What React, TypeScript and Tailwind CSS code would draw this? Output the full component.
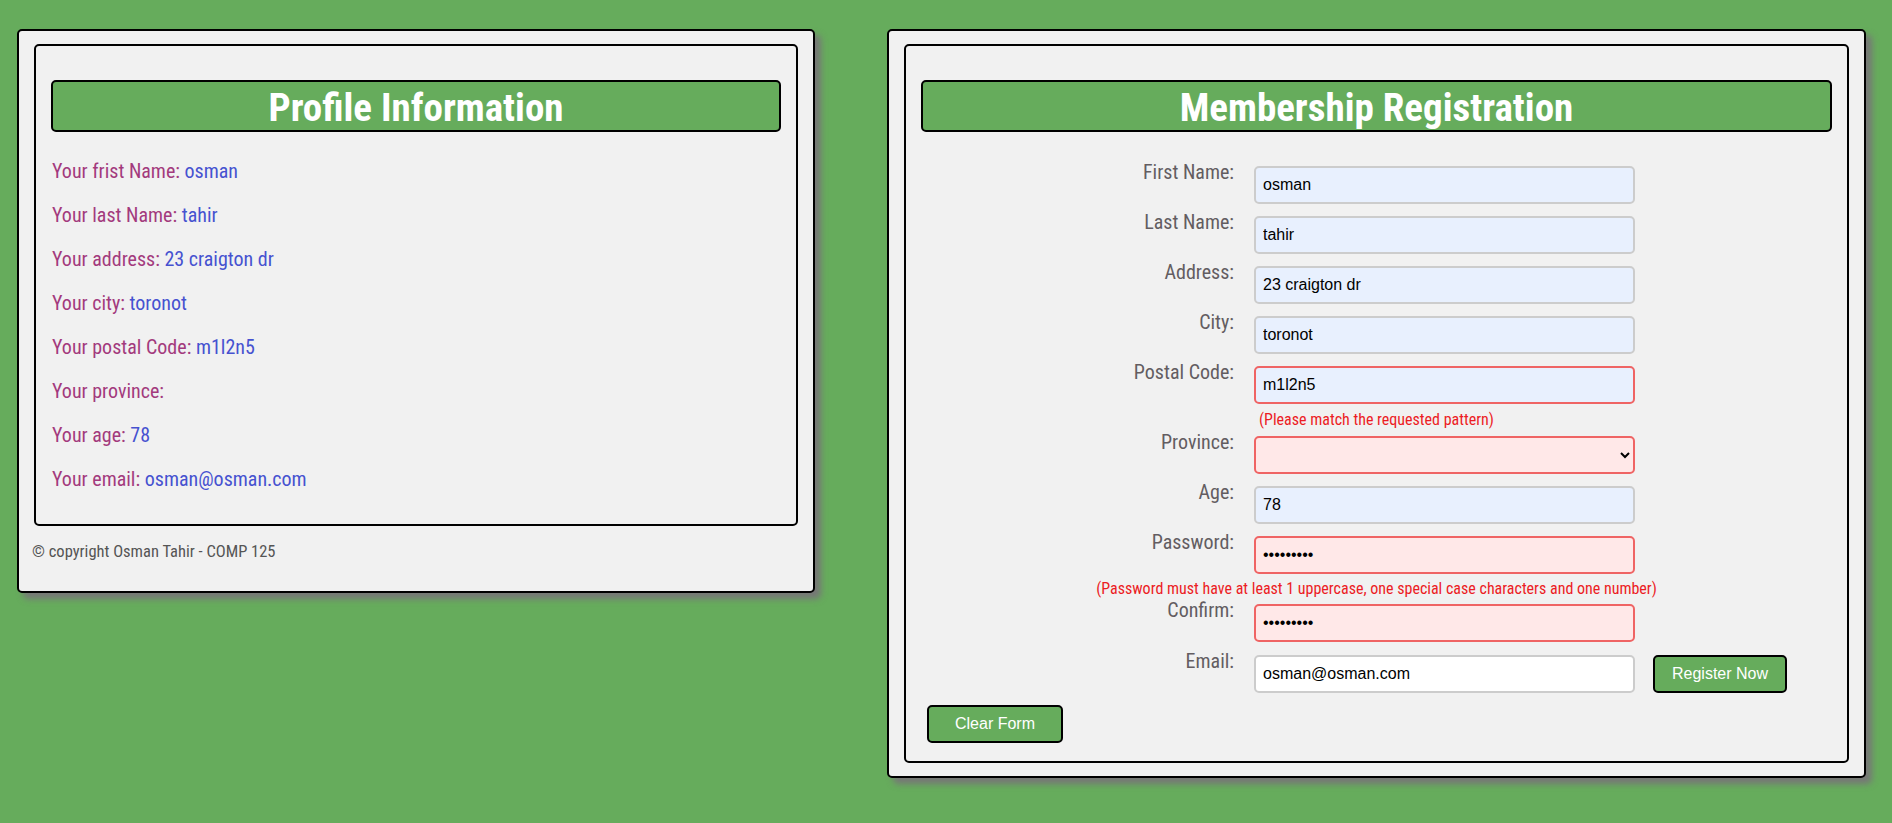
import React from 'react';

const COND = "font-['Roboto_Condensed','Liberation_Sans_Narrow',Roboto,sans-serif]";
const ARIAL = "font-['Liberation_Sans',Arial,sans-serif]";

const PROFILE = [
    { label: 'Your frist Name:', value: 'osman' },
    { label: 'Your last Name:', value: 'tahir' },
    { label: 'Your address:', value: '23 craigton dr' },
    { label: 'Your city:', value: 'toronot' },
    { label: 'Your postal Code:', value: 'm1l2n5' },
    { label: 'Your province:', value: '' },
    { label: 'Your age:', value: '78' },
    { label: 'Your email:', value: 'osman@osman.com' },
];

const inputBase = `h-[38px] w-[381px] rounded-[5px] border-2 px-[7px] text-[16px] text-black outline-none ${ARIAL}`;
const okAuto = 'border-[#cccccc] bg-[#e8f0fe]';
const badAuto = 'border-[#ef6464] bg-[#e8f0fe]';
const bad = 'border-[#ef6464] bg-[#ffe8e8]';

function Header({ title }: { title: string }) {
    return (
        <div className="flex h-[52px] items-center justify-center rounded-[5px] border-2 border-black bg-[#66ac5c] pt-[3px]">
            <h1 className={`text-[39px] font-bold leading-[48px] text-white ${COND}`}>{title}</h1>
        </div>
    );
}

function Row({ label, children }: { label: string; children: React.ReactNode }) {
    return (
        <div className="flex items-start">
            <label className={`-mt-[6px] w-[313px] text-right text-[20px] leading-[24px] text-[#635d61] ${COND}`}>
                {label}
            </label>
            <div className="ml-[20px] flex items-start gap-[18px]">{children}</div>
        </div>
    );
}

function ErrorLine({ text, center }: { text: string; center?: boolean }) {
    return (
        <p
            className={`h-[18px] text-[16px] leading-[18px] text-[#ec1c24] ${COND} ${
                center ? 'text-center' : 'pl-[338px]'
            }`}
        >
            {text}
        </p>
    );
}

function Btn({ text, className }: { text: string; className?: string }) {
    return (
        <button
            type="button"
            className={`h-[38px] rounded-[5px] border-2 border-black bg-[#66ac5c] text-[16px] text-white ${ARIAL} ${className ?? ''}`}
        >
            {text}
        </button>
    );
}

export default function App() {
    return (
        <div className="min-h-[823px] w-full bg-[#66ac5c]">
            <div className="flex items-start gap-[72px] pl-[17px] pt-[29px]">
                {/* profile card */}
                <section className="w-[798px] rounded-[5px] border-2 border-black bg-[#f1f1f1] px-[15px] pb-[29px] pt-[13px] shadow-[6px_6px_6px_#777777]">
                    <div className="rounded-[5px] border-2 border-black px-[15px] pb-[33px] pt-[34px]">
                        <Header title="Profile Information" />
                        <div className={`mt-[27px] flex flex-col gap-[20px] pl-[1px] text-[20px] leading-[24px] ${COND}`}>
                            {PROFILE.map(row => (
                                <p key={row.label} className="text-[#a33a7d]">
                                    {row.label} <span className="text-[#4652d0]">{row.value}</span>
                                </p>
                            ))}
                        </div>
                    </div>
                    <p className={`-ml-[2px] mt-[16px] text-[16.5px] leading-[20px] text-[#555555] ${COND}`}>
                        © copyright Osman Tahir - COMP 125
                    </p>
                </section>

                {/* registration card */}
                <section className="w-[979px] rounded-[5px] border-2 border-black bg-[#f1f1f1] px-[15px] pb-[13px] pt-[13px] shadow-[6px_6px_6px_#777777]">
                    <div className="rounded-[5px] border-2 border-black px-[15px] pb-[18px] pt-[34px]">
                        <Header title="Membership Registration" />
                        <form className="mt-[34px] flex flex-col">
                            <div className="flex flex-col gap-[12px]">
                                <Row label="First Name:">
                                    <input className={`${inputBase} ${okAuto}`} defaultValue="osman" />
                                </Row>
                                <Row label="Last Name:">
                                    <input className={`${inputBase} ${okAuto}`} defaultValue="tahir" />
                                </Row>
                                <Row label="Address:">
                                    <input className={`${inputBase} ${okAuto}`} defaultValue="23 craigton dr" />
                                </Row>
                                <Row label="City:">
                                    <input className={`${inputBase} ${okAuto}`} defaultValue="toronot" />
                                </Row>
                                <Row label="Postal Code:">
                                    <input className={`${inputBase} ${badAuto}`} defaultValue="m1l2n5" />
                                </Row>
                            </div>
                            <div className="mb-[7px] mt-[7px]">
                                <ErrorLine text="(Please match the requested pattern)" />
                            </div>
                            <div className="flex flex-col gap-[12px]">
                                <Row label="Province:">
                                    <select className={`${inputBase} ${bad} pr-[4px]`} defaultValue="">
                                        <option value=""></option>
                                        <option value="ON">Ontario</option>
                                    </select>
                                </Row>
                                <Row label="Age:">
                                    <input className={`${inputBase} ${okAuto}`} defaultValue="78" />
                                </Row>
                                <Row label="Password:">
                                    <input type="password" className={`${inputBase} ${bad}`} defaultValue="osman1234" />
                                </Row>
                            </div>
                            <div className="mb-[6px] mt-[6px]">
                                <ErrorLine
                                    center
                                    text="(Password must have at least 1 uppercase, one special case characters and one number)"
                                />
                            </div>
                            <div className="flex flex-col gap-[13px]">
                                <Row label="Confirm:">
                                    <input type="password" className={`${inputBase} ${bad}`} defaultValue="osman1234" />
                                </Row>
                                <Row label="Email:">
                                    <input className={`${inputBase} border-[#cccccc] bg-white`} defaultValue="osman@osman.com" />
                                    <Btn text="Register Now" className="w-[134px]" />
                                </Row>
                            </div>
                            <div className="mt-[12px]">
                                <Btn text="Clear Form" className="ml-[6px] w-[136px]" />
                            </div>
                        </form>
                    </div>
                </section>
            </div>
        </div>
    );
}
